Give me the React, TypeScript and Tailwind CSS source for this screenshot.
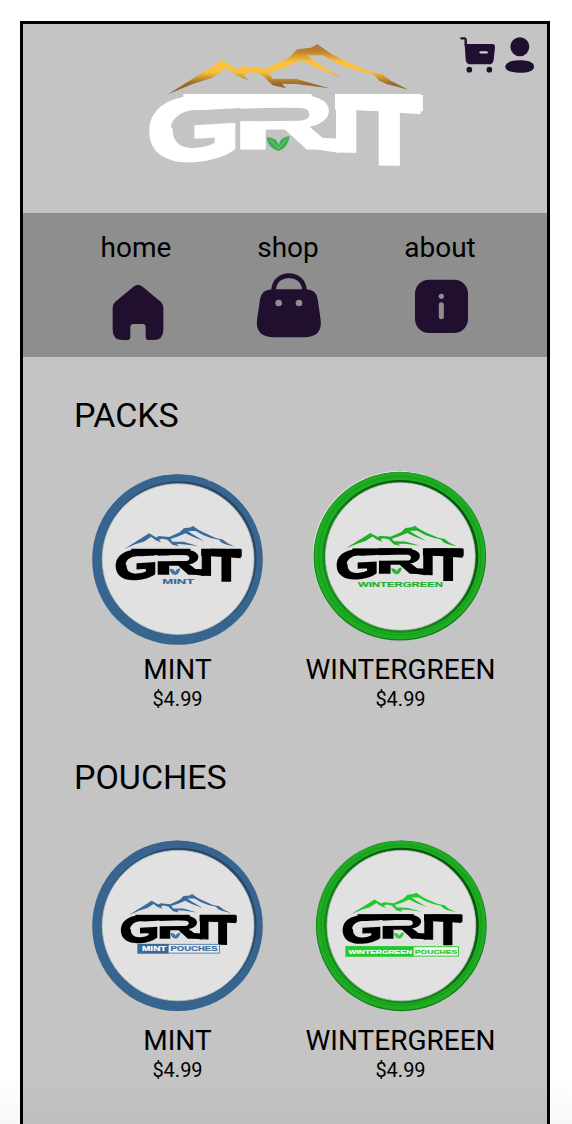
import React from "react";

const INK = "#210f30";

type MarkProps = {
  id: string;
  color: string;
  ridge: string;
  leaf: string;
  x?: number;
  y?: number;
  width: number;
  height: number;
};

/* Brand mark: ridge line, wordmark and leaf. */
function Mark({ id, color, ridge, leaf, ...box }: MarkProps) {
  return (
    <svg {...box} viewBox="0 0 870 420" preserveAspectRatio="none" role="img" aria-label="GRIT" className="overflow-visible">
      <mask id={id + "-cut"} maskUnits="userSpaceOnUse" x="-100" y="-100" width="1100" height="700">
        <rect x="-100" y="-100" width="1100" height="700" fill="white" />
        <path d="M286 222 Q390 217 485 219 Q508 221 508 238 Q508 256 480 257 L286 259Z" fill="black" />
        <path d="M286 222 H300 V360 H286Z" fill="black" />
        <path d="M92 275 Q100 238 150 230 Q210 222 300 220 V249 L147 261 V280 L110 295Z" fill="black" />
      </mask>
      <path
        d="M84 178 L246 76 L293 103 L310 94 L377 101 L445 69 L472 43 L513 38 L532 28 L570 54 L609 75 L680 106 L725 116 L755 139 L805 164 L742 148 L718 137 L701 119 L647 106 L600 89 L548 61 L500 61 L524 79 L606 128 L530 99 L483 76 L438 96 L385 114 L398 131 L470 132 L568 160 L469 147 L426 146 L438 160 L398 151 L365 119 L330 111 L310 119 L325 136 L288 121 L259 99 L215 129 L160 146Z"
        fill={ridge}
      />
      <g mask={`url(#${id}-cut)`} fill={color} stroke={color}>
        <g fontFamily="'Liberation Sans', Arial, sans-serif" fontWeight="700" fontSize="100">
          <text transform="matrix(3.62 -.2 0 2.63 22 380)" strokeWidth="5">G</text>
          <text transform="matrix(4.15 0 0 2.3 281 340)" strokeWidth="4">R</text>
          <text transform="matrix(3.7 .12 0 2.45 567 349)" strokeWidth="2">I</text>
          <text transform="matrix(3.1 .05 0 2.85 653 382)" strokeWidth="6">T</text>
        </g>
        <rect x="130" y="177" width="385" height="43" stroke="none" />
        <path d="M585 177 H842 V238 L778 233 L648 224 H585Z" stroke="none" />
        <path d="M490 328 L522 289 L546 308 L600 311 V354 L502 339Z" stroke="none" />
      </g>
      <path
        d="M380 307 Q410 307 416 329 Q420 307 449 303 Q444 339 416 348 Q382 339 380 307Z"
        fill={leaf}
      />
      <path d="M390 314 L416 340 L440 311" fill="none" stroke="white" strokeOpacity=".55" strokeWidth="2" />
    </svg>
  );
}

type Kind = "mintPack" | "winterPack" | "mintPouch" | "winterPouch";

const rings = {
  mintPack: { ox: 89.5, oy: 91.5, orx: 85.3, ory: 85.3, ix: 90.7, iy: 91.1, irx: 76.3, iry: 75.3 },
  winterPack: { ox: 88.8, oy: 88.2, orx: 86.3, ory: 84.4, ix: 89.3, iy: 88.4, irx: 75.3, iry: 73.7 },
  mintPouch: { ox: 89.5, oy: 91.8, orx: 85.3, ory: 85.3, ix: 90.7, iy: 91.6, irx: 76.3, iry: 75.2 },
  winterPouch: { ox: 90.3, oy: 91.8, orx: 85.4, ory: 85.4, ix: 90.4, iy: 91.6, irx: 74.8, iry: 75.2 },
};

const marks = {
  mintPack: { x: 23.3, y: 53.6, width: 133.7, height: 64.5 },
  winterPack: { x: 21.4, y: 53.4, width: 134.6, height: 64 },
  mintPouch: { x: 29, y: 56.1, width: 122.8, height: 58.6 },
  winterPouch: { x: 27.6, y: 54.6, width: 127, height: 60.6 },
};

function Label({ x, y, w, size, fill, children }: { x: number; y: number; w: number; size: number; fill: string; children: string }) {
  return (
    <text
      x={x}
      y={y}
      textLength={w}
      lengthAdjust="spacingAndGlyphs"
      fontSize={size}
      fill={fill}
      stroke={fill}
      strokeWidth=".15"
      fontWeight="700"
      fontFamily="'Liberation Sans', Arial, sans-serif"
    >
      {children}
    </text>
  );
}

function Tin({ kind }: { kind: Kind }) {
  const r = rings[kind];
  const green = kind === "winterPack" || kind === "winterPouch";
  const tone = green ? (kind === "winterPouch" ? "#25c92b" : "#22b02a") : "#3c6b9b";
  return (
    <svg width="180" height="180" viewBox="0 0 180 180" className="shrink-0">
      <defs>
        <linearGradient id={kind + "-shade"} x1="0" y1="1" x2="1" y2="0">
          <stop offset="0" stopColor={green ? "#1a9a1e" : "#39658e"} />
          <stop offset=".4" stopColor={green ? "#138017" : "#365f87"} />
          <stop offset=".75" stopColor={green ? "#04590a" : "#294868"} />
          <stop offset="1" stopColor={green ? "#04590a" : "#294868"} />
        </linearGradient>
      </defs>
      {kind === "winterPack" && <ellipse cx={r.ox - 0.7} cy={r.oy - 0.7} rx={r.orx} ry={r.ory} fill="#e4efe4" />}
      <ellipse cx={r.ox} cy={r.oy} rx={r.orx} ry={r.ory} fill={green ? "#127c16" : "#33658a"} />
      <ellipse cx={r.ox} cy={r.oy - 0.5} rx={r.orx - 0.8} ry={r.ory - 0.8} fill={green ? "#1eac22" : "#386590"} />
      {green && (
        <ellipse cx={r.ox} cy={r.oy - 0.6} rx={r.orx - 5.2} ry={r.ory - 5.2} fill="none" stroke="#199c1d" strokeWidth="1.2" />
      )}
      <ellipse
        cx={green ? r.ix : r.ix + 0.3}
        cy={green ? r.iy : r.iy - 0.8}
        rx={r.irx + (green ? 2.7 : 1.4)}
        ry={r.iry + (green ? 2.7 : 1.8)}
        fill={`url(#${kind}-shade)`}
      />
      <ellipse cx={r.ix - (green ? 0 : 0.6)} cy={r.iy} rx={r.irx - 0.4} ry={r.iry} fill="#e1e1e1" stroke="#b9c1bd" strokeWidth=".8" />
      {!green && <circle cx="121.5" cy={r.oy - 79} r=".8" fill="#c4d3da" />}
      <Mark id={kind} color="#000" ridge={tone} leaf={tone} {...marks[kind]} />
      {kind === "mintPack" && <Label x={74.3} y={116} w={32} size={6.7} fill={tone}>MINT</Label>}
      {kind === "winterPack" && <Label x={47} y={119} w={85} size={7} fill={tone}>WINTERGREEN</Label>}
      {kind === "mintPouch" && (
        <>
          <rect x="50" y="110.3" width="81.5" height="8.8" fill="#e7edf0" stroke={tone} strokeWidth=".8" />
          <rect x="49.6" y="109.9" width="31" height="9.6" fill={tone} />
          <Label x={54} y={117} w={24.5} size={6.4} fill="#fff">MINT</Label>
          <Label x={82.5} y={117} w={47} size={6.4} fill={tone}>POUCHES</Label>
        </>
      )}
      {kind === "winterPouch" && (
        <>
          <rect x="35" y="112.7" width="112.5" height="9.4" fill="#eef5ef" stroke={tone} strokeWidth=".9" />
          <rect x="34.6" y="112.3" width="68" height="10.2" fill={tone} />
          <Label x={37.5} y={119.5} w={63.5} size={6} fill="#fff">WINTERGREEN</Label>
          <Label x={103.8} y={119.5} w={42.5} size={6} fill={tone}>POUCHES</Label>
        </>
      )}
    </svg>
  );
}

function Product({ kind, name, textGap }: { kind: Kind; name: string; textGap: string }) {
  return (
    <div className="flex w-[179px] flex-col items-center">
      <Tin kind={kind} />
      <div className={`${textGap} text-[28px] leading-8 whitespace-nowrap`}>{name}</div>
      <div className="mt-px text-xl leading-6">$4.99</div>
    </div>
  );
}

function CartIcon() {
  return (
    <svg width="38" height="40" viewBox="27 60 114 120" fill={INK}>
      <path d="M34 70 H43 Q47 70 47 76 V90" fill="none" stroke={INK} strokeWidth="7" strokeLinecap="round" />
      <path d="M44 87 H126 Q136 87 135 97 L131 134 Q129 148 117 148 H62 Q49 148 47 134Z" />
      <path d="M92 112 H110" stroke="#d0cdd3" strokeWidth="7" strokeLinecap="round" />
      <circle cx="58" cy="164" r="8.5" />
      <circle cx="118" cy="164" r="8.5" />
    </svg>
  );
}

function UserIcon() {
  return (
    <svg width="32" height="40" viewBox="162 60 96 120" fill={INK}>
      <circle cx="209.5" cy="95" r="28.5" />
      <path d="M166 155 C166 142 184 136 209 136 C235 136 252 142 252 155 C252 167 235 173 209 173 C184 173 166 167 166 155Z" />
    </svg>
  );
}

function HomeIcon() {
  return (
    <svg width="72" height="75" viewBox="33 135 216 225" fill={INK}>
      <path d="M132 184 Q144 175 156 184 L212 230 Q220 237 220 247 V315 Q220 345 190 345 H177 Q167 345 167 335 V307 Q167 297 157 297 H131 Q121 297 121 307 V335 Q121 345 111 345 H98 Q68 345 68 315 V247 Q68 237 76 230Z" />
    </svg>
  );
}

function BagIcon() {
  return (
    <svg width="72" height="75" viewBox="489 135 216 225" fill={INK}>
      <path d="M551 200 V193 C555 138 639 138 643 193 V200" fill="none" stroke={INK} strokeWidth="14" />
      <path d="M547 193 H648 Q679 193 683 223 L692 285 Q698 336 642 337 H552 Q495 336 501 285 L510 223 Q515 193 547 193Z" />
      <circle cx="566" cy="234" r="10" fill="#8e8e8e" />
      <circle cx="627" cy="234" r="10" fill="#8e8e8e" />
    </svg>
  );
}

function InfoIcon() {
  return (
    <svg width="72" height="75" viewBox="945 135 216 225" fill={INK}>
      <rect x="975" y="164" width="159" height="160" rx="42" />
      <circle cx="1054" cy="214" r="8" fill="#8e8e8e" />
      <path d="M1054 239 V275" stroke="#8e8e8e" strokeWidth="15" strokeLinecap="round" />
    </svg>
  );
}

const links = [
  { label: "home", icon: <HomeIcon /> },
  { label: "shop", icon: <BagIcon /> },
  { label: "about", icon: <InfoIcon /> },
];

export default function App() {
  return (
    <div className="relative h-[1124px] w-[572px] overflow-hidden bg-white pt-[21px] pl-5 font-['Roboto',sans-serif] text-black">
      <div className="h-[1110px] w-[530px] border-[3px] border-black bg-[#c4c4c4]">
        <header className="flex h-[189px] items-start pt-[11px] pl-[117px]">
          <svg width="0" height="0" className="absolute">
            <defs>
              <linearGradient id="gold" x1="0" y1="0" x2="0" y2="1">
                <stop offset="0" stopColor="#aa742c" />
                <stop offset=".15" stopColor="#bd8430" />
                <stop offset=".35" stopColor="#fcc239" />
                <stop offset=".56" stopColor="#f8bf39" />
                <stop offset=".78" stopColor="#9b6b2d" />
                <stop offset="1" stopColor="#94632c" />
              </linearGradient>
            </defs>
          </svg>
          <Mark id="brand" color="#fff" ridge="url(#gold)" leaf="#3eaf4c" width={290} height={140} />
          <div className="ml-[29px] flex gap-[7px]">
            <CartIcon />
            <UserIcon />
          </div>
        </header>
        <nav className="grid h-36 grid-cols-[152px_152px_152px] bg-[#8e8e8e] pt-[19px] pl-[38px]">
          {links.map((l) => (
            <a key={l.label} className="flex flex-col items-center gap-[6px]">
              <span className="pr-[2px] text-[28px] leading-8">{l.label}</span>
              {l.icon}
            </a>
          ))}
        </nav>
        <main className="pt-[38px]">
          <section>
            <h2 className="pl-[51px] text-[34px] leading-10">PACKS</h2>
            <div className="mt-[33px] flex gap-[44px] pl-[65px]">
              <Product kind="mintPack" name="MINT" textGap="mt-[6px]" />
              <Product kind="winterPack" name="WINTERGREEN" textGap="mt-[6px]" />
            </div>
          </section>
          <section className="mt-[46px]">
            <h2 className="pl-[51px] text-[34px] leading-10">POUCHES</h2>
            <div className="mt-[37px] flex gap-[44px] pl-[65px]">
              <Product kind="mintPouch" name="MINT" textGap="mt-[11px]" />
              <Product kind="winterPouch" name="WINTERGREEN" textGap="mt-[11px]" />
            </div>
          </section>
        </main>
      </div>
      <div className="pointer-events-none absolute inset-x-0 bottom-0 h-12 bg-linear-to-b from-black/0 to-black/3" />
    </div>
  );
}
